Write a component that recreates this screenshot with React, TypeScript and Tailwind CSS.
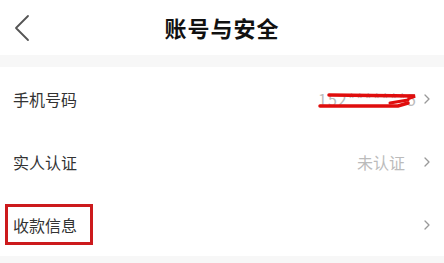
const font = { fontFamily: '"Noto Sans CJK SC", "Noto Sans", sans-serif' };

function Chevron() {
  return (
    <svg width="6" height="10" viewBox="0 0 6 10" fill="none">
      <path d="M1 1 L5 5 L1 9" stroke="#999" strokeWidth="1.3" strokeLinecap="round" strokeLinejoin="round" />
    </svg>
  );
}

function Row({ label, value, boxed, children }: { label: string; value?: string; boxed?: boolean; children?: React.ReactNode }) {
  return (
    <div className="h-[63px] flex items-center justify-between pl-[13px] pr-[14px]">
      <div className="relative">
        <span className="text-[16px] text-[#333]">{label}</span>
        {boxed && (
          <div className="absolute -left-[8px] -right-[16px] -top-[9px] -bottom-[8px] border-[3px] border-[#cc1a1d]" />
        )}
      </div>
      <div className="flex items-center gap-[19px]">
        {value && <span className="text-[16px] text-[#bbb]">{value}</span>}
        {children}
        <Chevron />
      </div>
    </div>
  );
}

export default function App() {
  return (
    <div className="w-[444px] h-[263px] bg-white overflow-hidden" style={font}>
      {/* Header */}
      <div className="h-[55px] relative flex items-center justify-center">
        <svg className="absolute left-[13px] top-[14px]" width="18" height="28" viewBox="0 0 18 28" fill="none">
          <path d="M15 2 L3 14 L15 26" stroke="#555" strokeWidth="1.8" strokeLinecap="round" strokeLinejoin="round" />
        </svg>
        <h1 className="text-[22px] font-bold text-[#111] tracking-[1px]">账号与安全</h1>
      </div>
      <div className="h-[12px] bg-[#f7f7f7]" />

      <Row label="手机号码">
        <div className="relative w-[100px] h-[24px] -mr-[13px] overflow-hidden whitespace-nowrap">
          <span className="text-[16px] leading-[24px] text-[#bbb] tracking-[1px]">152*******5</span>
          <svg className="absolute left-0 top-0" width="100" height="24" viewBox="0 0 100 24" fill="none">
            <path d="M11 8 L97 9 L91 11" stroke="#e00d0d" strokeWidth="3.5" strokeLinecap="round" />
            <path d="M2 19 L80 19 L90 16" stroke="#e00d0d" strokeWidth="3.5" strokeLinecap="round" />
            <path d="M72 16 L90 13" stroke="#e00d0d" strokeWidth="3" strokeLinecap="round" />
          </svg>
        </div>
      </Row>
      <Row label="实人认证" value="未认证" />
      <Row label="收款信息" boxed />
      <div className="h-[20px] bg-[#f7f7f7]" />
    </div>
  );
}
